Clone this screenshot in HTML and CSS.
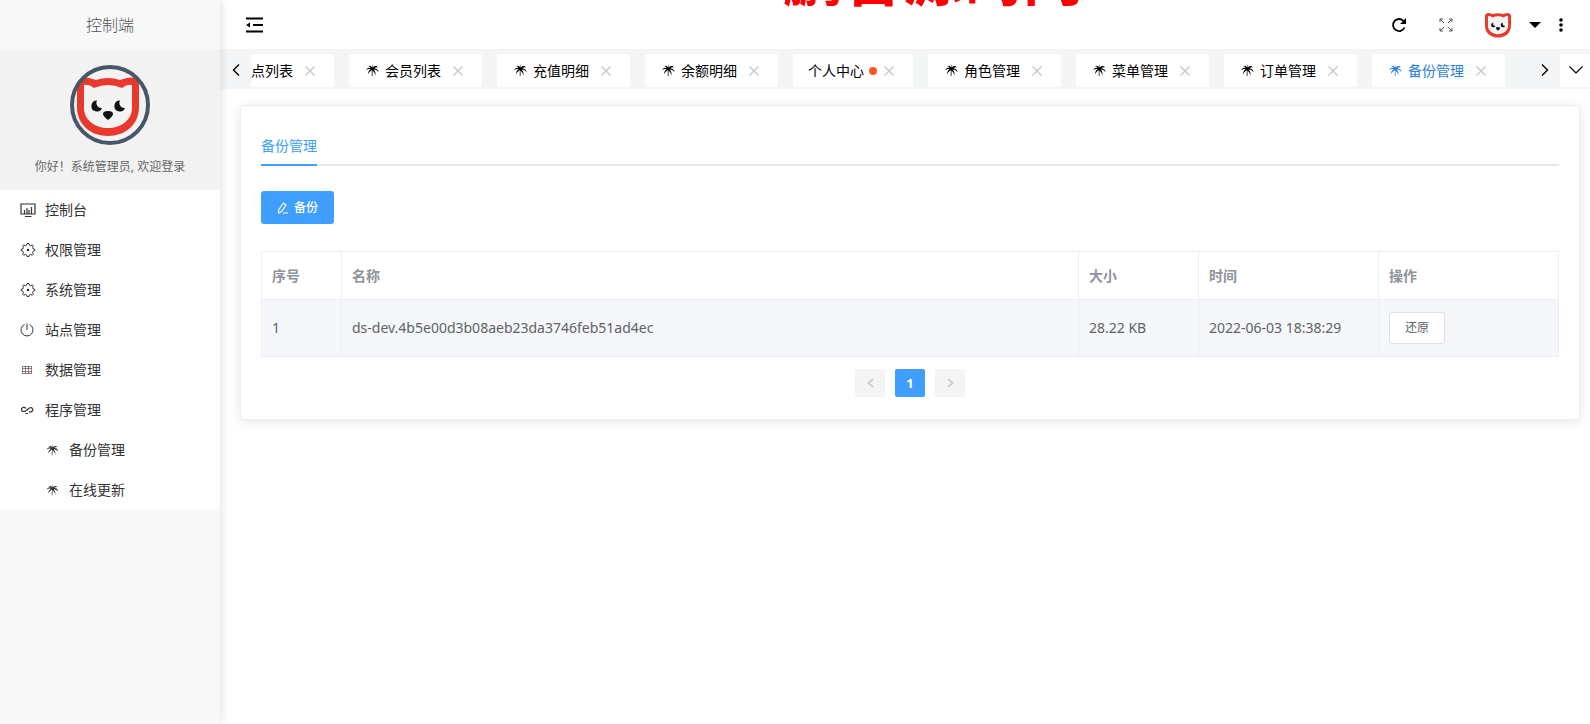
FILE: index.html
```html
<!DOCTYPE html>
<html lang="zh-CN">
<head>
<meta charset="utf-8">
<title>备份管理</title>
<link rel="stylesheet" href="styles.css">
</head>
<body>
<svg class="sprite" aria-hidden="true">
  <symbol id="fox" viewBox="7 11 62 60">
    <path d="M7 18Q10 11 19 13L26 15Q38 11 50 15L57 13Q66 11 69 18V42C69 60 55 71 38 71S7 60 7 42Z" fill="#e8392c"/>
    <path d="M14 20Q19 19 24 23Q38 17 52 23Q57 19 62 20V43C62 55 51 63 38 63S14 55 14 43Z" fill="#f3f3f3"/>
    <path d="M27 35.500A5.500 5.500 0 1 0 32 43A5 5 0 0 1 27 35.500ZM50 35.500A5.500 5.500 0 1 0 55 43A5 5 0 0 1 50 35.500Z" fill="#111"/>
    <path d="M33 49Q33 46 38 46T43 49Q43 51 38 55Q33 51 33 49Z" fill="#111"/>
  </symbol>
  <symbol id="palm" viewBox="0 0 14 14">
    <path d="M7 4Q5 1 2 2.500Q4 2.500 5 4Q1.500 3.500 0 6.500Q3 5 5 5.500Q2 7.500 2 11Q4 8 6.200 6.500V13H7V7Q9 8.500 10.500 12.500Q10.500 8.500 8.500 6Q11 6 13.500 8.500Q13 5 9 4.500Q11 3 13 3.500Q10 1 7.800 3.500L7 0Z" fill="currentColor"/>
  </symbol>
  <symbol id="gear" viewBox="0 0 16 16">
    <path d="M7 1.500H9L9.500 3.300L10.700 3.800L12.300 2.800L13.400 4L12.500 5.500L13 6.800L14.700 7.200V8.800L13 9.300L12.500 10.500L13.400 12.100L12.200 13.300L10.600 12.400L9.400 12.900L9 14.500H7L6.600 12.900L5.400 12.400L3.800 13.300L2.600 12.100L3.500 10.500L3 9.300L1.300 8.800V7.200L3 6.800L3.500 5.500L2.600 4L3.700 2.800L5.300 3.800L6.500 3.300Z" fill="none" stroke="currentColor" stroke-linejoin="round"/>
    <circle cx="8" cy="8" r="1.300" fill="currentColor"/>
  </symbol>
  <symbol id="close" viewBox="0 0 10 10"><path d="M0.500 0.500L9.500 9.500M9.500 0.500L0.500 9.500" stroke="#c4c4c4" stroke-width="1.200" fill="none"/></symbol>
</svg>

<div class="app">
  <aside class="sidebar">
    <div class="brand">控制端</div>
    <div class="profile">
      <svg class="avatar" viewBox="0 0 80 80"><circle cx="40" cy="40" r="38" fill="#f3f3f3"/><use href="#fox" x="7" y="11" width="62" height="60"/><circle cx="40" cy="40" r="38" fill="none" stroke="#475669" stroke-width="4"/></svg>
      <p class="greeting">你好！系统管理员, 欢迎登录</p>
    </div>
    <nav class="menu">
      <a class="menu-item" href="#"><svg viewBox="0 0 16 16"><path d="M1 2H15V12H1ZM4.500 12V8M7 12V6M9 12V8M11.500 12V5M5 14.500H11.500" fill="none" stroke="currentColor" stroke-width="1.200"/></svg>控制台</a>
      <a class="menu-item" href="#"><svg><use href="#gear"/></svg>权限管理</a>
      <a class="menu-item" href="#"><svg><use href="#gear"/></svg>系统管理</a>
      <a class="menu-item" href="#"><svg viewBox="0 0 16 16"><path d="M4.500 2.500A6 6 0 1 0 9.500 2.500M7 1.500V8" fill="none" stroke="currentColor"/></svg>站点管理</a>
      <a class="menu-item" href="#"><svg viewBox="0 0 16 16"><path d="M2.500 4.500H11.500V11.500H2.500ZM2.500 6.500H11.500M2.500 9.500H11.500M5.500 4V12M8.500 4V12" fill="none" stroke="#6a5a60" stroke-width="0.800"/></svg>数据管理</a>
      <a class="menu-item" href="#"><svg viewBox="0 0 16 16"><path d="M6 6.500C4 4 1 6 1.500 8S5 10 7 8S11 4.500 12.500 6.500S11 11 9 9.500M5.500 11.500H8" fill="none" stroke="currentColor" stroke-width="1.200"/></svg>程序管理</a>
      <div class="submenu">
        <a class="menu-item sub" href="#"><svg><use href="#palm"/></svg>备份管理</a>
        <a class="menu-item sub" href="#"><svg><use href="#palm"/></svg>在线更新</a>
      </div>
    </nav>
  </aside>

  <div class="main">
    <header class="topbar">
      <button class="icon-btn" aria-label="收起菜单"><svg width="18" height="16" viewBox="0 0 18 16"><path d="M1 1.500H18M8 8H18M1 14.500H18" stroke="#000" stroke-width="2"/><path d="M1 8L5 5.500V10.500Z"/></svg></button>
      <div class="watermark">鹏曾源码网</div>
      <div class="tools">
        <button class="icon-btn" aria-label="刷新"><svg width="16" height="16" viewBox="0 0 16 16"><path d="M13.500 10.500A6 6 0 1 1 12.500 4" fill="none" stroke="#000" stroke-width="1.800"/><path d="M15 1V7H9Z"/></svg></button>
        <button class="icon-btn" aria-label="全屏"><svg width="14" height="14" viewBox="0 0 14 14"><path d="M1 4V1H4M1 1L5 5M10 1H13V4M13 1L9 5M1 10V13H4M1 13L5 9M10 13H13V10M13 13L9 9" fill="none" stroke="#555"/></svg></button>
        <button class="icon-btn user" aria-label="用户"><svg width="26" height="26"><use href="#fox"/></svg><svg width="12" height="6" viewBox="0 0 12 6"><path d="M0 0H12L6 6Z"/></svg></button>
        <button class="icon-btn" aria-label="更多"><svg width="4" height="14" viewBox="0 0 4 14"><circle cx="2" cy="2" r="1.800"/><circle cx="2" cy="7" r="1.800"/><circle cx="2" cy="12" r="1.800"/></svg></button>
      </div>
    </header>

    <div class="tabbar">
      <button class="icon-btn arrow" aria-label="向左"><svg width="8" height="12" viewBox="0 0 8 12"><path d="M7 0.500L1.500 6L7 11.500" fill="none" stroke="#000" stroke-width="1.400"/></svg></button>
      <div class="tabs">
        <div class="tab clipped">点列表<svg class="x"><use href="#close"/></svg></div>
        <div class="tab"><svg class="p"><use href="#palm"/></svg>会员列表<svg class="x"><use href="#close"/></svg></div>
        <div class="tab"><svg class="p"><use href="#palm"/></svg>充值明细<svg class="x"><use href="#close"/></svg></div>
        <div class="tab"><svg class="p"><use href="#palm"/></svg>余额明细<svg class="x"><use href="#close"/></svg></div>
        <div class="tab plain">个人中心<i class="dot"></i><svg class="x"><use href="#close"/></svg></div>
        <div class="tab"><svg class="p"><use href="#palm"/></svg>角色管理<svg class="x"><use href="#close"/></svg></div>
        <div class="tab"><svg class="p"><use href="#palm"/></svg>菜单管理<svg class="x"><use href="#close"/></svg></div>
        <div class="tab"><svg class="p"><use href="#palm"/></svg>订单管理<svg class="x"><use href="#close"/></svg></div>
        <div class="tab active"><svg class="p"><use href="#palm"/></svg>备份管理<svg class="x"><use href="#close"/></svg></div>
      </div>
      <button class="icon-btn arrow" aria-label="向右"><svg width="8" height="12" viewBox="0 0 8 12"><path d="M1 0.500L6.500 6L1 11.500" fill="none" stroke="#000" stroke-width="1.400"/></svg></button>
      <button class="icon-btn down" aria-label="展开"><svg width="14" height="8" viewBox="0 0 14 8"><path d="M0.500 0.500L7 7L13.500 0.500" fill="none" stroke="#000" stroke-width="1.200"/></svg></button>
    </div>

    <main class="card">
      <div class="card-tabs"><a class="card-tab" href="#">备份管理</a></div>
      <button class="primary"><svg width="12" height="12" viewBox="0 0 12 12"><path d="M1.500 8L6.500 1L9 3L4.500 9.500L1.500 11ZM6 11H11" fill="none" stroke="#fff" stroke-width="1.200"/></svg>备份</button>
      <table class="grid">
        <colgroup><col class="c-no"><col><col class="c-size"><col class="c-wide"><col class="c-wide"></colgroup>
        <thead><tr><th>序号</th><th>名称</th><th>大小</th><th>时间</th><th>操作</th></tr></thead>
        <tbody><tr><td>1</td><td>ds-dev.4b5e00d3b08aeb23da3746feb51ad4ec</td><td>28.22 KB</td><td>2022-06-03 18:38:29</td><td><button class="restore">还原</button></td></tr></tbody>
      </table>
      <div class="pager">
        <button class="page" aria-label="上一页"><svg width="7" height="10" viewBox="0 0 7 10"><path d="M6 1L1.500 5L6 9" fill="none" stroke="#c0c4cc" stroke-width="1.600"/></svg></button>
        <button class="page current">1</button>
        <button class="page" aria-label="下一页"><svg width="7" height="10" viewBox="0 0 7 10"><path d="M1 1L5.500 5L1 9" fill="none" stroke="#c0c4cc" stroke-width="1.600"/></svg></button>
      </div>
    </main>
  </div>
</div>
</body>
</html>
```
FILE: styles.css
```css
* { box-sizing: border-box; }
body {
  margin: 0;
  background: #fff;
  color: #333;
  font: 14px/20px "Noto Sans", "Noto Sans CJK SC", sans-serif;
}
button { font: inherit; padding: 0; border: 0; background: none; cursor: pointer; }
a { color: inherit; text-decoration: none; }
svg { display: block; flex: none; }
.sprite { position: absolute; width: 0; height: 0; }

.app { display: flex; min-height: 100vh; }

.sidebar {
  flex: none;
  width: 220px;
  background: #f8f8f8;
  box-shadow: 0 0 10px rgba(0, 0, 0, 0.15);
  z-index: 1;
}
.brand { height: 50px; line-height: 50px; text-align: center; font-size: 16px; font-weight: 300; color: #555; }
.profile { height: 140px; padding-top: 15px; background: #f2f2f2; }
.avatar { width: 80px; height: 80px; margin: 0 auto; }
.greeting { margin: 12px 0 0; text-align: center; font-size: 12px; color: #666; }
.menu { background: #fff; border-radius: 0 0 4px 4px; }
.menu-item { display: flex; align-items: center; gap: 9px; height: 40px; padding-left: 20px; color: #333; }
.menu-item svg { width: 16px; height: 16px; }
.submenu { border-radius: 4px; }
.menu-item.sub { padding-left: 46px; gap: 10px; }
.menu-item.sub svg { width: 13px; height: 12px; }

.main { flex: 1; min-width: 0; }
.topbar { position: relative; display: flex; align-items: center; justify-content: space-between; height: 49px; padding: 0 27px 0 25px; }
.icon-btn { display: flex; align-items: center; justify-content: center; }
.watermark { position: absolute; left: 563px; top: -52px; font-size: 60px; line-height: 60px; font-weight: 700; white-space: nowrap; color: #f00; }
.tools { display: flex; align-items: center; gap: 32px; }
.user { gap: 18px; }
.tools .icon-btn:last-child { margin-left: -14px; }

.tabbar { display: flex; align-items: center; height: 40px; padding-top: 2px; background: #f4f5f7; }
.arrow { flex: none; width: 31px; height: 33px; }
.tabs { flex: 1; min-width: 0; display: flex; gap: 15px; overflow: hidden; }
.tab { flex: none; display: flex; align-items: center; width: 133px; height: 33px; padding: 1px 19px 0 17px; background: #fff; color: #000; border-radius: 2px; }
.tab .p { width: 13px; height: 13px; margin-right: 6px; }
.tab .x { width: 10px; height: 10px; margin-left: auto; }
.clipped { width: 83px; padding-left: 0; }
.plain { width: 120px; padding-left: 15px; }
.dot { width: 8px; height: 8px; margin-left: 5px; border-radius: 50%; background: #ff5722; }
.tab.active { color: #2d7fd9; }
.down { flex: none; width: 30px; height: 33px; padding-left: 2px; background: #fff; }

.card { margin: 16px 10px 0 20px; padding: 20px 20px 22px; background: #fff; border: 1px solid #ebeef5; border-radius: 4px; box-shadow: 0 2px 12px rgba(0, 0, 0, 0.1); }
.card-tabs { display: flex; border-bottom: 2px solid #e4e7ed; }
.card-tab { height: 40px; margin-bottom: -2px; line-height: 40px; border-bottom: 2px solid #409eff; color: #409eff; }
.primary { display: flex; align-items: center; gap: 5px; height: 33px; margin-top: 25px; padding: 0 16px; border-radius: 3px; background: #409eff; color: #fff; font-size: 12px; font-weight: 500; }

.grid { width: 100%; margin-top: 27px; table-layout: fixed; border-collapse: collapse; color: #606266; }
.c-no { width: 80px; }
.c-size { width: 120px; }
.c-wide { width: 180px; }
.grid th, .grid td { padding: 0 10px; border: 1px solid #ebeef5; text-align: left; }
.grid th { height: 48px; color: #909399; font-weight: 700; }
.grid td { height: 57px; background: #f5f7fa; }
.restore { height: 32px; padding: 0 15px; border: 1px solid #dcdfe6; border-radius: 3px; background: #fff; color: #606266; font-size: 12px; }

.pager { display: flex; justify-content: center; gap: 10px; margin-top: 12px; }
.page { display: flex; align-items: center; justify-content: center; width: 30px; height: 28px; border-radius: 2px; background: #f4f4f5; font-size: 13px; font-weight: 700; }
.page.current { background: #409eff; color: #fff; }
```
